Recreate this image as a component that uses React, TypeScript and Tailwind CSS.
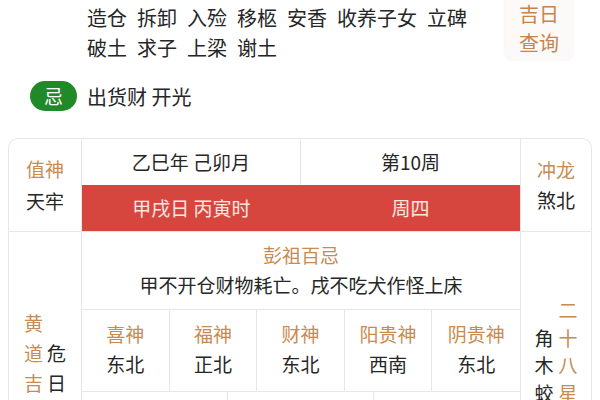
import React from "react"

const FONT = { fontFamily: '"Noto Sans CJK SC", "Noto Sans", sans-serif' }

const yiWords1 = ["造仓", "拆卸", "入殓", "移柩", "安香", "收养子女", "立碑"]
const yiWords2 = ["破土", "求子", "上梁", "谢土"]

const gods = [
  { name: "喜神", dir: "东北" },
  { name: "福神", dir: "正北" },
  { name: "财神", dir: "东北" },
  { name: "阳贵神", dir: "西南" },
  { name: "阴贵神", dir: "东北" },
]

const extras = [
  { name: "胎神占方", value: "门鸡栖外西南" },
  { name: "吉神宜趋", value: "天德 月德" },
  { name: "凶神宜忌", value: "月煞 月虚" },
]

function Vertical({ text, className }: { text: string; className: string }) {
  return (
    <div className={"flex flex-col items-center " + className}>
      {text.split("").map((c, i) => (
        <span key={i}>{c}</span>
      ))}
    </div>
  )
}

export default function App() {
  return (
    <div className="w-[600px] h-[400px] overflow-hidden bg-white text-[#262626]" style={FONT}>
      {/* 宜 list + 吉日查询 */}
      <div className="flex">
        <div className="pl-[87px] pt-[3px] text-[20px] leading-[30px] flex-1">
          <div className="flex gap-x-[10px]">
            {yiWords1.map((w) => (
              <span key={w}>{w}</span>
            ))}
          </div>
          <div className="flex gap-x-[10px]">
            {yiWords2.map((w) => (
              <span key={w}>{w}</span>
            ))}
          </div>
        </div>
        <div className="-mt-[16px] mr-[27px] w-[68px] h-[76px] rounded-[8px] bg-[#fcfaf8] shadow-[0_0_3px_rgba(0,0,0,0.08)] flex flex-col items-center justify-end pb-[3px] text-[20px] leading-[29px] text-[#c8834c]">
          <span>吉日</span>
          <span>查询</span>
        </div>
      </div>

      {/* 忌 */}
      <div className="flex items-center gap-[10px] pl-[30px] mt-[17px]">
        <span className="w-[47px] h-[30px] rounded-full bg-[#1f8a27] text-white text-[19px] flex items-center justify-center">
          忌
        </span>
        <span className="text-[20px] leading-[30px] mt-[2px]">出货财 开光</span>
      </div>

      {/* 黄历卡片 */}
      <div className="ml-[8px] mt-[26px] w-[584px] border border-[#e7e7e7] rounded-[10px] overflow-hidden text-[19px]">
        {/* top block */}
        <div className="flex border-b border-[#e7e7e7]">
          <div className="w-[73px] border-r border-[#e7e7e7] flex flex-col items-center justify-center leading-[32px]">
            <span className="text-[#c98a50]">值神</span>
            <span>天牢</span>
          </div>
          <div className="w-[439px] border-r border-[#e7e7e7]">
            <div className="flex h-[46px]">
              <div className="w-[219px] border-r border-[#e7e7e7] flex items-center justify-center">乙巳年 己卯月</div>
              <div className="flex-1 flex items-center justify-center">第10周</div>
            </div>
            <div className="flex h-[46px] bg-[#d7463e] text-[#fde6e2]">
              <div className="w-[219px] flex items-center justify-center">甲戌日 丙寅时</div>
              <div className="flex-1 flex items-center justify-center">周四</div>
            </div>
          </div>
          <div className="flex-1 flex flex-col items-center justify-center leading-[30px]">
            <span className="text-[#c98a50]">冲龙</span>
            <span>煞北</span>
          </div>
        </div>

        {/* bottom block */}
        <div className="flex">
          <div className="w-[73px] border-r border-[#e7e7e7] flex items-center justify-center gap-[4px] leading-[30px]">
            <Vertical text="黄道吉日" className="text-[#c98a50]" />
            <Vertical text="危日" className="" />
          </div>
          <div className="w-[439px] border-r border-[#e7e7e7]">
            <div className="border-b border-[#e7e7e7] pt-[8px] pb-[9px] text-center leading-[30px]">
              <div className="text-[#c98a50]">彭祖百忌</div>
              <div>甲不开仓财物耗亡。戌不吃犬作怪上床</div>
            </div>
            <div className="grid grid-cols-5 border-b border-[#e7e7e7]">
              {gods.map((g, i) => (
                <div
                  key={g.name}
                  className={
                    "pt-[9px] pb-[12px] text-center leading-[30px] " +
                    (i < 4 ? "border-r border-[#e7e7e7]" : "")
                  }
                >
                  <div className="text-[#c98a50]">{g.name}</div>
                  <div>{g.dir}</div>
                </div>
              ))}
            </div>
            <div className="grid grid-cols-3">
              {extras.map((e, i) => (
                <div
                  key={e.name}
                  className={
                    "pt-[24px] pb-[28px] text-center leading-[30px] " +
                    (i < 2 ? "border-r border-[#e7e7e7]" : "")
                  }
                >
                  <div className="text-[#c98a50]">{e.name}</div>
                  <div>{e.value}</div>
                </div>
              ))}
            </div>
          </div>
          <div className="flex-1 flex items-center justify-center gap-[5px] leading-[27.5px] pb-[6px]">
            <Vertical text="角木蛟" className="" />
            <Vertical text="二十八星宿" className="text-[#c98a50]" />
          </div>
        </div>
      </div>
    </div>
  )
}
